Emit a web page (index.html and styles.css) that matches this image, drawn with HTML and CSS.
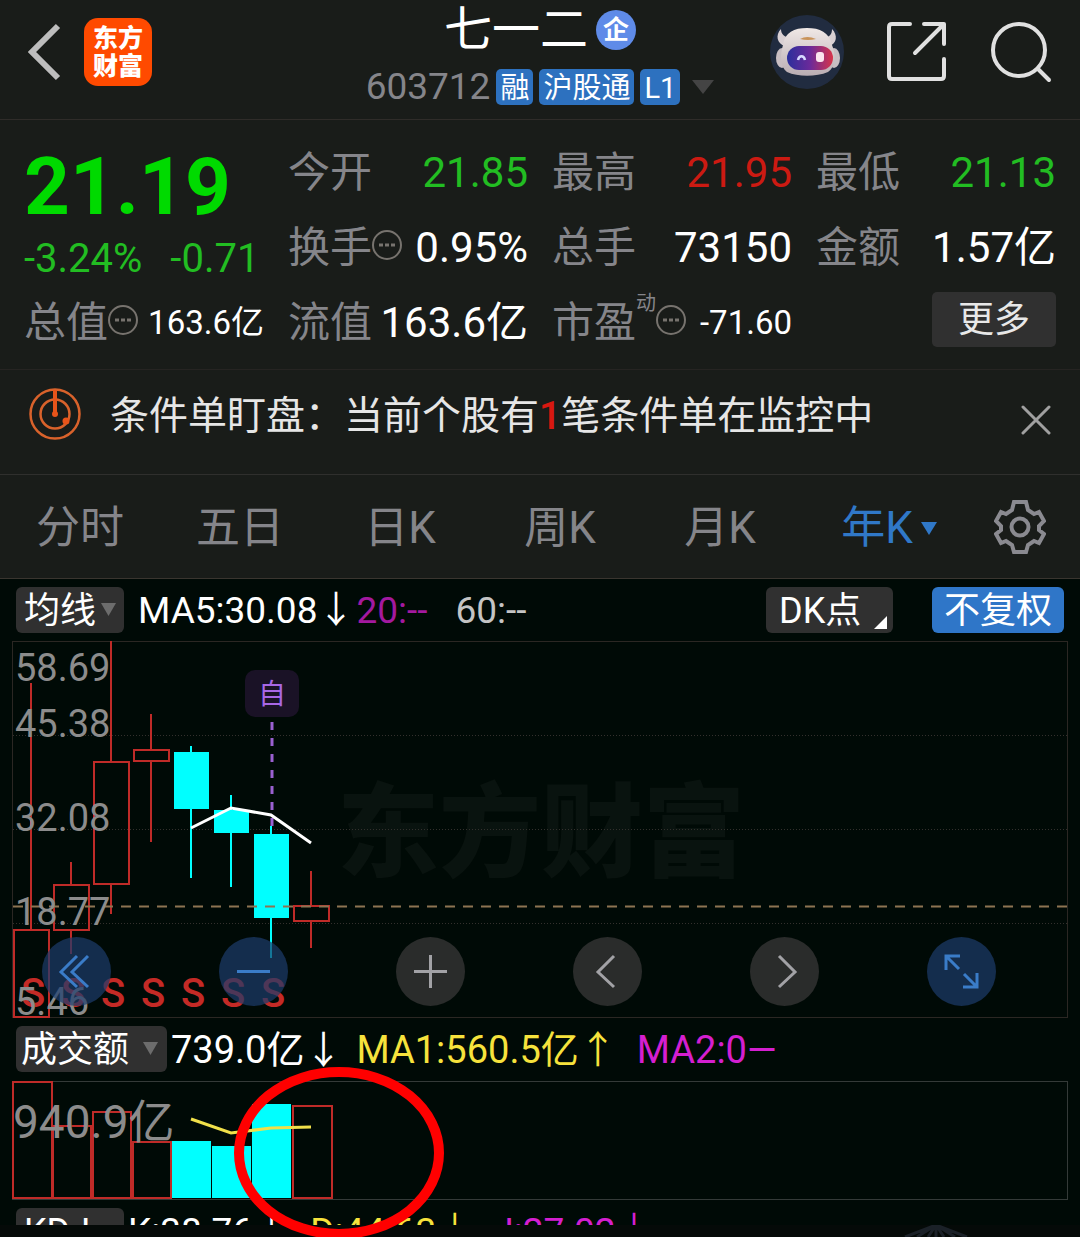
FILE: index.html
```html
<!DOCTYPE html>
<html lang="zh-CN">
<head>
    <meta charset="UTF-8">
    <meta name="viewport" content="width=device-width, initial-scale=1.0">
    <title>七一二 603712</title>
    <link rel="stylesheet" href="styles.css">
</head>
<body>
    <!-- Header -->
    <header class="header">
        <div class="header-left">
            <button class="icon-btn" aria-label="返回">
                <svg width="34" height="58" viewBox="0 0 34 58" fill="none" stroke="#bdbdbd" stroke-width="6"><path d="M30 3 L4 29 L30 55"/></svg>
            </button>
            <a class="logo" href="#">东方<br>财富</a>
        </div>
        <div class="header-center">
            <h1 class="title">七一二<span class="badge">企</span></h1>
            <div class="subtitle">
                <span class="code">603712</span>
                <span class="tag">融</span>
                <span class="tag">沪股通</span>
                <span class="tag">L1</span>
                <svg class="code-caret" width="22" height="14" viewBox="0 0 22 14"><path d="M0 0H22L11 14Z" fill="#444"/></svg>
            </div>
        </div>
        <div class="header-right">
            <button class="icon-btn" aria-label="助手">
                <svg width="74" height="74" viewBox="0 0 74 74">
                    <defs>
                        <linearGradient id="visor"><stop offset="0" stop-color="#2b2f9c"/><stop offset="0.5" stop-color="#6b2a9a"/><stop offset="1" stop-color="#d8344a"/></linearGradient>
                        <linearGradient id="face" x2="0" y2="1"><stop offset="0" stop-color="#f0e8e6"/><stop offset="1" stop-color="#b9adb3"/></linearGradient>
                    </defs>
                    <circle cx="37" cy="37" r="37" fill="#212c40"/>
                    <path d="M11 14C5 20 7 29 15 31L20 23C14 22 11 19 11 14ZM62 14C68 20 67 29 59 31L54 23C60 22 62 19 62 14Z" fill="#d9d0d3"/>
                    <ellipse cx="12" cy="43" rx="6" ry="10" fill="#c8bec3"/>
                    <ellipse cx="64" cy="43" rx="6" ry="10" fill="#c8bec3"/>
                    <path d="M13 30C15 17 24 13 37 13S59 17 62 30C66 40 66 52 58 57C46 62 28 62 17 57C10 52 10 40 13 30Z" fill="url(#face)"/>
                    <path d="M30 24Q37 20 46 24Q38 26 30 24Z" fill="#c9935a"/>
                    <rect x="17" y="31" width="46" height="24" rx="12" fill="url(#visor)"/>
                    <path d="M28 45C29 40 34 40 35 45" fill="none" stroke="#d7d9ff" stroke-width="2.5"/>
                    <rect x="46" y="37" width="8" height="10" rx="3" fill="#fbe4ee"/>
                </svg>
            </button>
            <button class="icon-btn" aria-label="分享">
                <svg width="60" height="60" viewBox="0 0 60 60" fill="none" stroke="#e0e0e0" stroke-width="4" stroke-linecap="round" stroke-linejoin="round"><path d="M23 2H5Q2 2 2 5V54Q2 57 5 57H54Q57 57 57 54V37M37 2H57V22M56 3L28 31"/></svg>
            </button>
            <button class="icon-btn" aria-label="搜索">
                <svg width="62" height="62" viewBox="0 0 62 62" fill="none" stroke="#e0e0e0" stroke-width="4" stroke-linecap="round"><circle cx="29" cy="29" r="26"/><path d="M48 48L59 59"/></svg>
            </button>
        </div>
    </header>

    <!-- Quote -->
    <section class="quote">
        <div class="price-box">
            <div class="price">21.19</div>
            <div class="change"><span>-3.24%</span><span>-0.71</span></div>
        </div>
        <div class="cell"><span class="label">今开</span><span class="value down">21.85</span></div>
        <div class="cell"><span class="label">最高</span><span class="value up">21.95</span></div>
        <div class="cell"><span class="label">最低</span><span class="value down">21.13</span></div>
        <div class="cell"><span class="label">换手<svg class="more-dot" viewBox="0 0 30 30"><circle cx="15" cy="15" r="14" fill="none" stroke="#77736e" stroke-width="2"/><path d="M7 15h4M13 15h4M19 15h4" stroke="#77736e" stroke-width="3"/></svg></span><span class="value">0.95%</span></div>
        <div class="cell"><span class="label">总手</span><span class="value">73150</span></div>
        <div class="cell"><span class="label">金额</span><span class="value">1.57亿</span></div>
        <div class="cell"><span class="label">总值<svg class="more-dot" viewBox="0 0 30 30"><circle cx="15" cy="15" r="14" fill="none" stroke="#77736e" stroke-width="2"/><path d="M7 15h4M13 15h4M19 15h4" stroke="#77736e" stroke-width="3"/></svg></span><span class="value small">163.6亿</span></div>
        <div class="cell"><span class="label">流值</span><span class="value">163.6亿</span></div>
        <div class="cell"><span class="label">市盈<sup>动</sup><svg class="more-dot" viewBox="0 0 30 30"><circle cx="15" cy="15" r="14" fill="none" stroke="#77736e" stroke-width="2"/><path d="M7 15h4M13 15h4M19 15h4" stroke="#77736e" stroke-width="3"/></svg></span><span class="value small">-71.60</span></div>
        <div class="cell cell-end"><button class="more-btn">更多</button></div>
    </section>

    <!-- Notice -->
    <section class="notice">
        <svg width="52" height="52" viewBox="0 0 52 52" fill="none" stroke="#d9622b" stroke-width="2.5"><circle cx="26" cy="26" r="24.5"/><circle cx="26" cy="26" r="14.5"/><path d="M26 2V26" stroke="#e8541a" stroke-width="4"/><circle cx="26" cy="26" r="3" fill="#e8541a" stroke="none"/><circle cx="37" cy="33" r="3.5" fill="#e8541a" stroke="none"/></svg>
        <p>条件单盯盘：当前个股有<b>1</b>笔条件单在监控中</p>
        <button class="icon-btn" aria-label="关闭">
            <svg width="30" height="30" viewBox="0 0 30 30" stroke="#a0a0a0" stroke-width="3" stroke-linecap="round"><path d="M2 2L28 28M28 2L2 28"/></svg>
        </button>
    </section>

    <!-- Period tabs -->
    <nav class="tabs">
        <a href="#">分时</a>
        <a href="#">五日</a>
        <a href="#">日K</a>
        <a href="#">周K</a>
        <a href="#">月K</a>
        <a href="#" class="active">年K<svg width="16" height="13" viewBox="0 0 16 13"><path d="M0 0H16L8 13Z" fill="#3078c8"/></svg></a>
        <button class="icon-btn settings" aria-label="设置">
            <svg width="52" height="54" viewBox="0 0 52 54" fill="none" stroke="#8a8a90" stroke-width="4"><path d="M20 2H32L34 10L40 14L45 12L50 21L45 26V30L50 34L45 43L40 41L34 45L32 52H20L18 45L12 41L7 43L2 34L7 30V26L2 21L7 12L12 14L18 10Z"/><circle cx="26" cy="27" r="8.5"/></svg>
        </button>
    </nav>

    <main class="charts">
        <!-- K line -->
        <div class="indicator">
            <button class="pick">均线<svg width="15" height="13" viewBox="0 0 15 13"><path d="M0 0H15L7.5 13Z" fill="#6c6c6c"/></svg></button>
            <span class="ma">MA5:30.08↓</span>
            <span class="ma purple">20:--</span>
            <span class="ma grey">60:--</span>
            <div class="indicator-right">
                <button class="pick dk">DK点<svg width="13" height="13" viewBox="0 0 13 13"><path d="M13 0V13H0Z" fill="#fff"/></svg></button>
                <button class="pick blue">不复权</button>
            </div>
        </div>
        <div class="chart">
            <svg class="plot" viewBox="0 0 1080 377">
                <text class="watermark" x="337" y="228">东方财富</text>
                <rect class="frame" x="12.5" y="0.5" width="1055" height="376"/>
                <path class="grid" d="M13 94.5H1067M13 188.5H1067M13 282.5H1067"/>
                <g class="rise">
                    <path d="M31 42V289M71 221V244M71 289V313M111 0V121M111 243V273M151 73V109M151 120V201M311 230V265M311 280V307"/>
                    <rect x="14" y="289" width="35" height="87"/>
                    <rect x="54" y="244" width="35" height="45"/>
                    <rect x="94" y="121" width="35" height="122"/>
                    <rect x="134" y="109" width="35" height="11"/>
                    <rect x="294" y="265" width="35" height="15"/>
                </g>
                <g class="fall">
                    <path d="M191 105V237M231 154V246M271 185V317"/>
                    <rect x="174" y="111" width="35" height="57"/>
                    <rect x="214" y="169" width="35" height="23"/>
                    <rect x="254" y="193" width="35" height="84"/>
                </g>
                <path class="last-price" d="M13 265.5H1067"/>
                <path class="mark-line" d="M272 81V185"/>
                <rect x="245" y="29" width="54" height="47" rx="10" fill="#1a1226"/>
                <text class="mark" x="272" y="63">自</text>
                <polyline class="ma5" points="191,187 231,167 271,174 311,202"/>
                <g class="sell">
                    <text x="33" y="366">S</text>
                    <text x="73" y="366">S</text>
                    <text x="113" y="366">S</text>
                    <text x="153" y="366">S</text>
                    <text x="193" y="366">S</text>
                    <text x="233" y="366">S</text>
                    <text x="273" y="366">S</text>
                </g>
                <g class="axis">
                    <text x="15" y="40">58.69</text>
                    <text x="15" y="96">45.38</text>
                    <text x="15" y="190">32.08</text>
                    <text x="15" y="284">18.77</text>
                    <text x="15" y="374">5.46</text>
                </g>
            </svg>
            <div class="controls">
                <button class="round on" aria-label="最早"><svg viewBox="0 0 69 69"><path d="M35 19L19 35L35 50M46 19L30 35L46 50"/></svg></button>
                <button class="round on" aria-label="缩小"><svg viewBox="0 0 69 69"><path d="M18 34.5H51"/></svg></button>
                <button class="round" aria-label="放大"><svg viewBox="0 0 69 69"><path d="M18 34.5H51M34.5 18V51"/></svg></button>
                <button class="round" aria-label="左移"><svg viewBox="0 0 69 69"><path d="M41 19L25 35L41 50"/></svg></button>
                <button class="round" aria-label="右移"><svg viewBox="0 0 69 69"><path d="M29 19L45 35L29 50"/></svg></button>
                <button class="round on" aria-label="全屏"><svg viewBox="0 0 69 69"><path d="M19 33V19H33M20 20L32 32M50 36V50H36M49 49L37 37"/></svg></button>
            </div>
        </div>

        <!-- Volume -->
        <div class="indicator indicator-volume">
            <button class="pick wide">成交额<svg width="15" height="13" viewBox="0 0 15 13"><path d="M0 0H15L7.5 13Z" fill="#6c6c6c"/></svg></button>
            <span class="ma">739.0亿↓</span>
            <span class="ma yellow">MA1:560.5亿↑</span>
            <span class="ma magenta">MA2:0—</span>
        </div>
        <div class="chart">
            <svg class="plot" viewBox="0 0 1080 120">
                <rect class="frame volume-frame" x="12.5" y="1.5" width="1055" height="118"/>
                <g class="rise">
                    <rect x="13" y="2" width="39" height="116"/>
                    <rect x="53" y="46" width="38" height="72"/>
                    <rect x="93" y="32" width="38" height="86"/>
                    <rect x="133" y="62" width="38" height="56"/>
                    <rect x="293" y="26" width="39" height="92"/>
                </g>
                <g class="fall">
                    <rect x="172" y="61" width="39" height="57"/>
                    <rect x="212" y="66" width="39" height="52"/>
                    <rect x="252" y="24" width="39" height="94"/>
                </g>
                <polyline class="vol-ma" points="191,39 231,53 271,48 311,47"/>
                <text class="axis volume-max" x="13" y="58">940.9亿</text>
            </svg>
            <svg class="annotation" viewBox="0 0 212 174"><ellipse cx="106" cy="87" rx="100" ry="81"/></svg>
        </div>

        <!-- KDJ, cut off by the bottom bar -->
        <div class="kdj">
            <button class="pick">KDJ<svg width="15" height="13" viewBox="0 0 15 13"><path d="M0 0H15L7.5 13Z" fill="#6c6c6c"/></svg></button>
            <span class="ma">K:38.76↓</span>
            <span class="ma yellow">D:44.63↓</span>
            <span class="ma magenta">J:27.02↓</span>
        </div>
    </main>

    <footer class="bottom-bar">
        <svg width="70" height="12" viewBox="0 0 70 12" stroke="#1b2128" stroke-width="3"><path d="M35 0L4 12M35 0L16 12M35 0L27 12M35 0V12M35 0L43 12M35 0L54 12M35 0L66 12"/></svg>
    </footer>
</body>
</html>
```

FILE: styles.css
```css
/* Basic Reset */
* {
    box-sizing: border-box;
    margin: 0;
    padding: 0;
}

body {
    font-family: Roboto, "Noto Sans CJK SC", sans-serif;
    background: #191c19;
    color: #fff;
    line-height: 1.1;
    overflow: hidden;
}

a {
    color: inherit;
    text-decoration: none;
}

button {
    font-family: inherit;
    line-height: inherit;
    color: #fff;
    border: none;
    cursor: pointer;
}

svg {
    display: block;
    flex-shrink: 0;
}

.icon-btn {
    background: none;
}

/* Header */
.header {
    display: grid;
    grid-template-columns: 1fr auto 1fr;
    height: 120px;
    padding: 0 28px;
    border-bottom: 1px solid #2f2c29;
}

.header-left,
.header-right {
    display: flex;
    align-items: center;
    height: 104px;
}

.header-left {
    gap: 22px;
}

.header-right {
    justify-content: flex-end;
    gap: 43px;
}

.logo {
    display: flex;
    align-items: center;
    justify-content: center;
    width: 68px;
    height: 68px;
    padding-top: 2px;
    border-radius: 14px;
    background: #ff4a00;
    font-size: 25px;
    font-weight: 900;
    line-height: 28px;
}

.header-center {
    display: flex;
    flex-direction: column;
    align-items: center;
    gap: 13px;
    padding-top: 4px;
}

.title {
    display: flex;
    align-items: center;
    gap: 8px;
    font-size: 48px;
    font-weight: 400;
    line-height: 52px;
}

.badge {
    width: 40px;
    height: 40px;
    border-radius: 50%;
    background: #5f8be8;
    font-size: 26px;
    font-weight: 700;
    line-height: 40px;
    text-align: center;
}

.subtitle {
    display: flex;
    align-items: center;
    gap: 6px;
}

.code {
    color: #85858a;
    font-size: 37px;
    line-height: 36px;
}

.tag {
    height: 36px;
    padding: 0 4px;
    border-radius: 5px;
    background: #2d71bf;
    font-size: 29px;
    line-height: 38px;
}

.code-caret {
    margin-left: 6px;
}

/* Quote */
.quote {
    display: grid;
    grid-template-columns: repeat(4, 1fr);
    grid-auto-rows: 75px;
    column-gap: 24px;
    padding: 14px 24px 10px;
    border-bottom: 1px solid #262422;
}

.price-box {
    grid-row: span 2;
    padding-top: 7px;
}

.price {
    color: #00da00;
    font-size: 80px;
    font-weight: 700;
    line-height: 92px;
}

.change {
    display: flex;
    gap: 28px;
    margin-top: 4px;
    color: #22bd22;
    font-size: 40px;
}

.cell {
    display: flex;
    align-items: center;
    justify-content: space-between;
    padding-top: 4px;
}

.label {
    display: flex;
    align-items: center;
    color: #85858a;
    font-size: 42px;
}

.label sup {
    align-self: flex-start;
    font-size: 20px;
    margin-top: -8px;
}

.more-dot {
    width: 30px;
    height: 30px;
    margin-bottom: 8px;
}

.value {
    font-size: 42px;
    white-space: nowrap;
}

.value.small {
    font-size: 33px;
}

.down {
    color: #22bd22;
}

.up {
    color: #cc1a12;
}

.cell-end {
    justify-content: flex-end;
}

.more-btn {
    width: 124px;
    height: 55px;
    margin-bottom: 8px;
    padding-top: 2px;
    border-radius: 5px;
    background: #303030;
    color: #e8e8e8;
    font-size: 36px;
}

/* Notice */
.notice {
    display: flex;
    align-items: center;
    gap: 29px;
    height: 105px;
    padding: 0 29px 16px;
    border-bottom: 1px solid #2f2f2d;
    color: #e6e6e6;
    font-size: 39px;
}

.notice p {
    flex: 1;
    padding-top: 4px;
}

.notice b {
    color: #d81810;
    font-weight: 500;
}

.notice .icon-btn {
    padding-top: 12px;
}

/* Tabs */
.tabs {
    display: grid;
    grid-template-columns: repeat(6, 4fr) 3fr;
    align-items: center;
    height: 104px;
    border-bottom: 1px solid #3a352f;
    color: #85858a;
    font-size: 44px;
}

.tabs a {
    display: flex;
    align-items: center;
    justify-content: center;
    gap: 8px;
    padding-top: 4px;
}

.tabs .active {
    padding-left: 18px;
    color: #3078c8;
}

.settings {
    display: flex;
    justify-content: center;
}

/* Charts */
.charts {
    background: #000a06;
}

.indicator,
.kdj {
    display: flex;
    align-items: center;
    padding: 0 16px;
}

.indicator {
    height: 62px;
    padding-bottom: 1px;
}

.pick {
    display: flex;
    align-items: center;
    justify-content: space-between;
    width: 108px;
    height: 46px;
    padding: 4px 8px 0;
    border-radius: 6px;
    background: #303030;
    font-size: 36px;
}

.pick svg {
    margin-bottom: 4px;
}

.pick.wide {
    width: 151px;
    padding: 4px 9px 0 5px;
}

.pick.dk {
    width: 127px;
    padding: 4px 6px 0 13px;
}

.pick.dk svg {
    align-self: flex-end;
}

.pick.blue {
    justify-content: center;
    width: 132px;
    background: #2f76c8;
}

.indicator-right {
    display: flex;
    gap: 39px;
    margin-left: auto;
}

.ma {
    margin-left: 14px;
    padding-top: 4px;
    font-size: 37px;
    white-space: nowrap;
}

.indicator-volume .ma {
    margin-left: 4px;
    font-size: 38px;
}

.indicator-volume .ma + .ma {
    margin-left: 14px;
}

.indicator-volume .ma + .magenta {
    margin-left: 20px;
}

.purple {
    margin-left: 2px;
    color: #a3199f;
}

.grey {
    margin-left: 28px;
    color: #c4c4c4;
}

.yellow {
    color: #f6e23c;
}

.magenta {
    color: #d41fd0;
}

.chart {
    position: relative;
}

.plot {
    width: 100%;
    height: auto;
}

.frame {
    fill: none;
    stroke: #2b2723;
}

.volume-frame {
    stroke: #343a38;
}

.grid {
    stroke: #33302d;
    stroke-dasharray: 1 2;
}

.watermark {
    fill: #09130f;
    font-size: 102px;
    font-weight: 900;
}

.rise {
    fill: none;
    stroke: #bf2b28;
    stroke-width: 2;
}

.fall {
    fill: #00ffff;
}

.fall path {
    stroke: #00ffff;
    stroke-width: 2;
}

.last-price {
    stroke: #8d7452;
    stroke-width: 2;
    stroke-dasharray: 10 8;
}

.mark-line {
    stroke: #9a60d0;
    stroke-width: 3;
    stroke-dasharray: 8 8;
}

.mark {
    fill: #a867e6;
    font-size: 28px;
    text-anchor: middle;
}

.ma5 {
    fill: none;
    stroke: #fff;
    stroke-width: 3;
}

.vol-ma {
    fill: none;
    stroke: #f0e04a;
    stroke-width: 3;
}

.sell {
    fill: #c42a26;
    font-size: 40px;
    font-weight: 500;
    text-anchor: middle;
}

.axis {
    fill: #8c8c8c;
    font-size: 38px;
}

.volume-max {
    font-size: 46px;
}

/* Buttons over the K line chart */
.controls {
    position: absolute;
    bottom: 12px;
    left: 0;
    display: flex;
    justify-content: space-between;
    width: 100%;
    padding: 0 84px 0 42px;
}

.round {
    width: 69px;
    height: 69px;
    border-radius: 50%;
    background: rgba(52, 52, 52, 0.8);
}

.round svg {
    fill: none;
    stroke: #a2a2a6;
    stroke-width: 3;
}

.round.on {
    background: rgba(28, 60, 108, 0.7);
}

.round.on svg {
    stroke: #3a7cc8;
}

/* Red circle over the latest volume bars */
.annotation {
    position: absolute;
    top: -14px;
    left: 233px;
    z-index: 1;
    width: 212px;
}

.annotation ellipse {
    fill: none;
    stroke: #ff0000;
    stroke-width: 10;
}

.kdj {
    align-items: flex-start;
    height: 25px;
    padding-top: 8px;
    overflow: hidden;
}

.kdj .ma {
    margin-left: 4px;
}

.kdj .ma + .ma {
    margin-left: 20px;
}

.bottom-bar {
    display: flex;
    justify-content: flex-end;
    height: 12px;
    padding: 0 109px;
    background: #050a08;
}
```
